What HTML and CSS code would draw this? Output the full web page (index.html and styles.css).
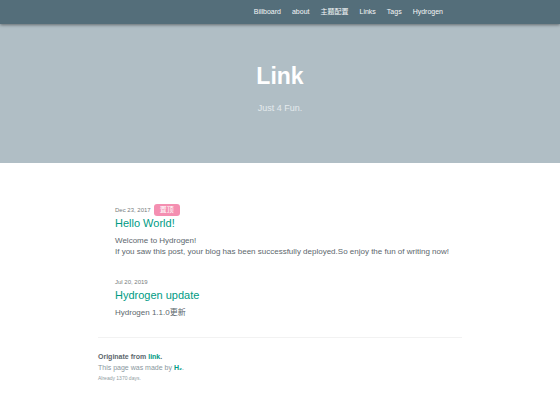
FILE: index.html
```
<!DOCTYPE html>
<html lang="en">
<head>
<meta charset="utf-8">
<title>Link</title>
<link rel="stylesheet" href="styles.css">
</head>
<body>
<nav class="nav">
  <div class="container nav-list">
    <a href="#">Billboard</a>
    <a href="#">about</a>
    <a href="#">主题配置</a>
    <a href="#">Links</a>
    <a href="#">Tags</a>
    <a href="#">Hydrogen</a>
  </div>
</nav>
<header class="hero">
  <h1>Link</h1>
  <p>Just 4 Fun.</p>
</header>
<main class="container posts">
  <article class="post">
    <div class="meta"><time datetime="2017-12-23">Dec 23, 2017</time><span class="badge">置顶</span></div>
    <h2><a href="#">Hello World!</a></h2>
    <p>Welcome to Hydrogen!<br>If you saw this post, your blog has been successfully deployed.So enjoy the fun of writing now!</p>
  </article>
  <article class="post">
    <div class="meta"><time datetime="2019-07-20">Jul 20, 2019</time></div>
    <h2><a href="#">Hydrogen update</a></h2>
    <p>Hydrogen 1.1.0更新</p>
  </article>
</main>
<footer class="container footer">
  <p class="origin">Originate from <a href="#">link</a>.</p>
  <p class="made">This page was made by <a href="#">H₂</a>.</p>
  <p class="days">Already 1370 days.</p>
</footer>
</body>
</html>
```
FILE: styles.css
```
* {
  box-sizing: border-box;
}

body {
  margin: 0;
  background: #fff;
  color: #5c676d;
  font-family: "Liberation Sans", "Noto Sans CJK SC", sans-serif;
  font-size: 8px;
  line-height: 12px;
}

h1, h2, p {
  margin: 0;
}

a {
  color: #009b84;
  text-decoration: none;
}

.container {
  width: 65%;
  margin: 0 auto;
}

.nav {
  position: relative;
  background: #546e7a;
  box-shadow: 0 1px 3px rgba(0, 0, 0, 0.45);
}

.nav-list {
  display: flex;
  justify-content: flex-end;
  gap: 11px;
  padding: 6px 19px;
  font-size: 7px;
}

.nav-list a {
  color: #f4f7f8;
}

.hero {
  padding: 38px 0 48px;
  background: #b0bec5;
  text-align: center;
}

.hero h1 {
  color: #fff;
  font-size: 23px;
  line-height: 28px;
}

.hero p {
  margin-top: 11px;
  color: #e4eaed;
  font-size: 9px;
  line-height: 14px;
}

.posts {
  padding: 41px 8px 19px 17px;
  border-bottom: 1px solid #f2f2f2;
}

.post + .post {
  margin-top: 19px;
}

.meta {
  display: flex;
  align-items: center;
  gap: 3px;
  color: #777d80;
  font-size: 6px;
}

.badge {
  padding: 0 6px;
  border-radius: 3px;
  background: #f48fb1;
  color: #fff;
  font-size: 7px;
}

.post h2 {
  margin-bottom: 4px;
  font-size: 11px;
  font-weight: 400;
  line-height: 15px;
}

.post p {
  line-height: 11px;
}

.footer {
  padding: 13px 0 32px;
  font-size: 7px;
  line-height: 11px;
}

.origin, .footer a {
  font-weight: 700;
}

.footer a {
  color: #009b84;
}

.made {
  color: #8a979e;
}

.days {
  color: #909ca2;
  font-size: 5px;
}
```
